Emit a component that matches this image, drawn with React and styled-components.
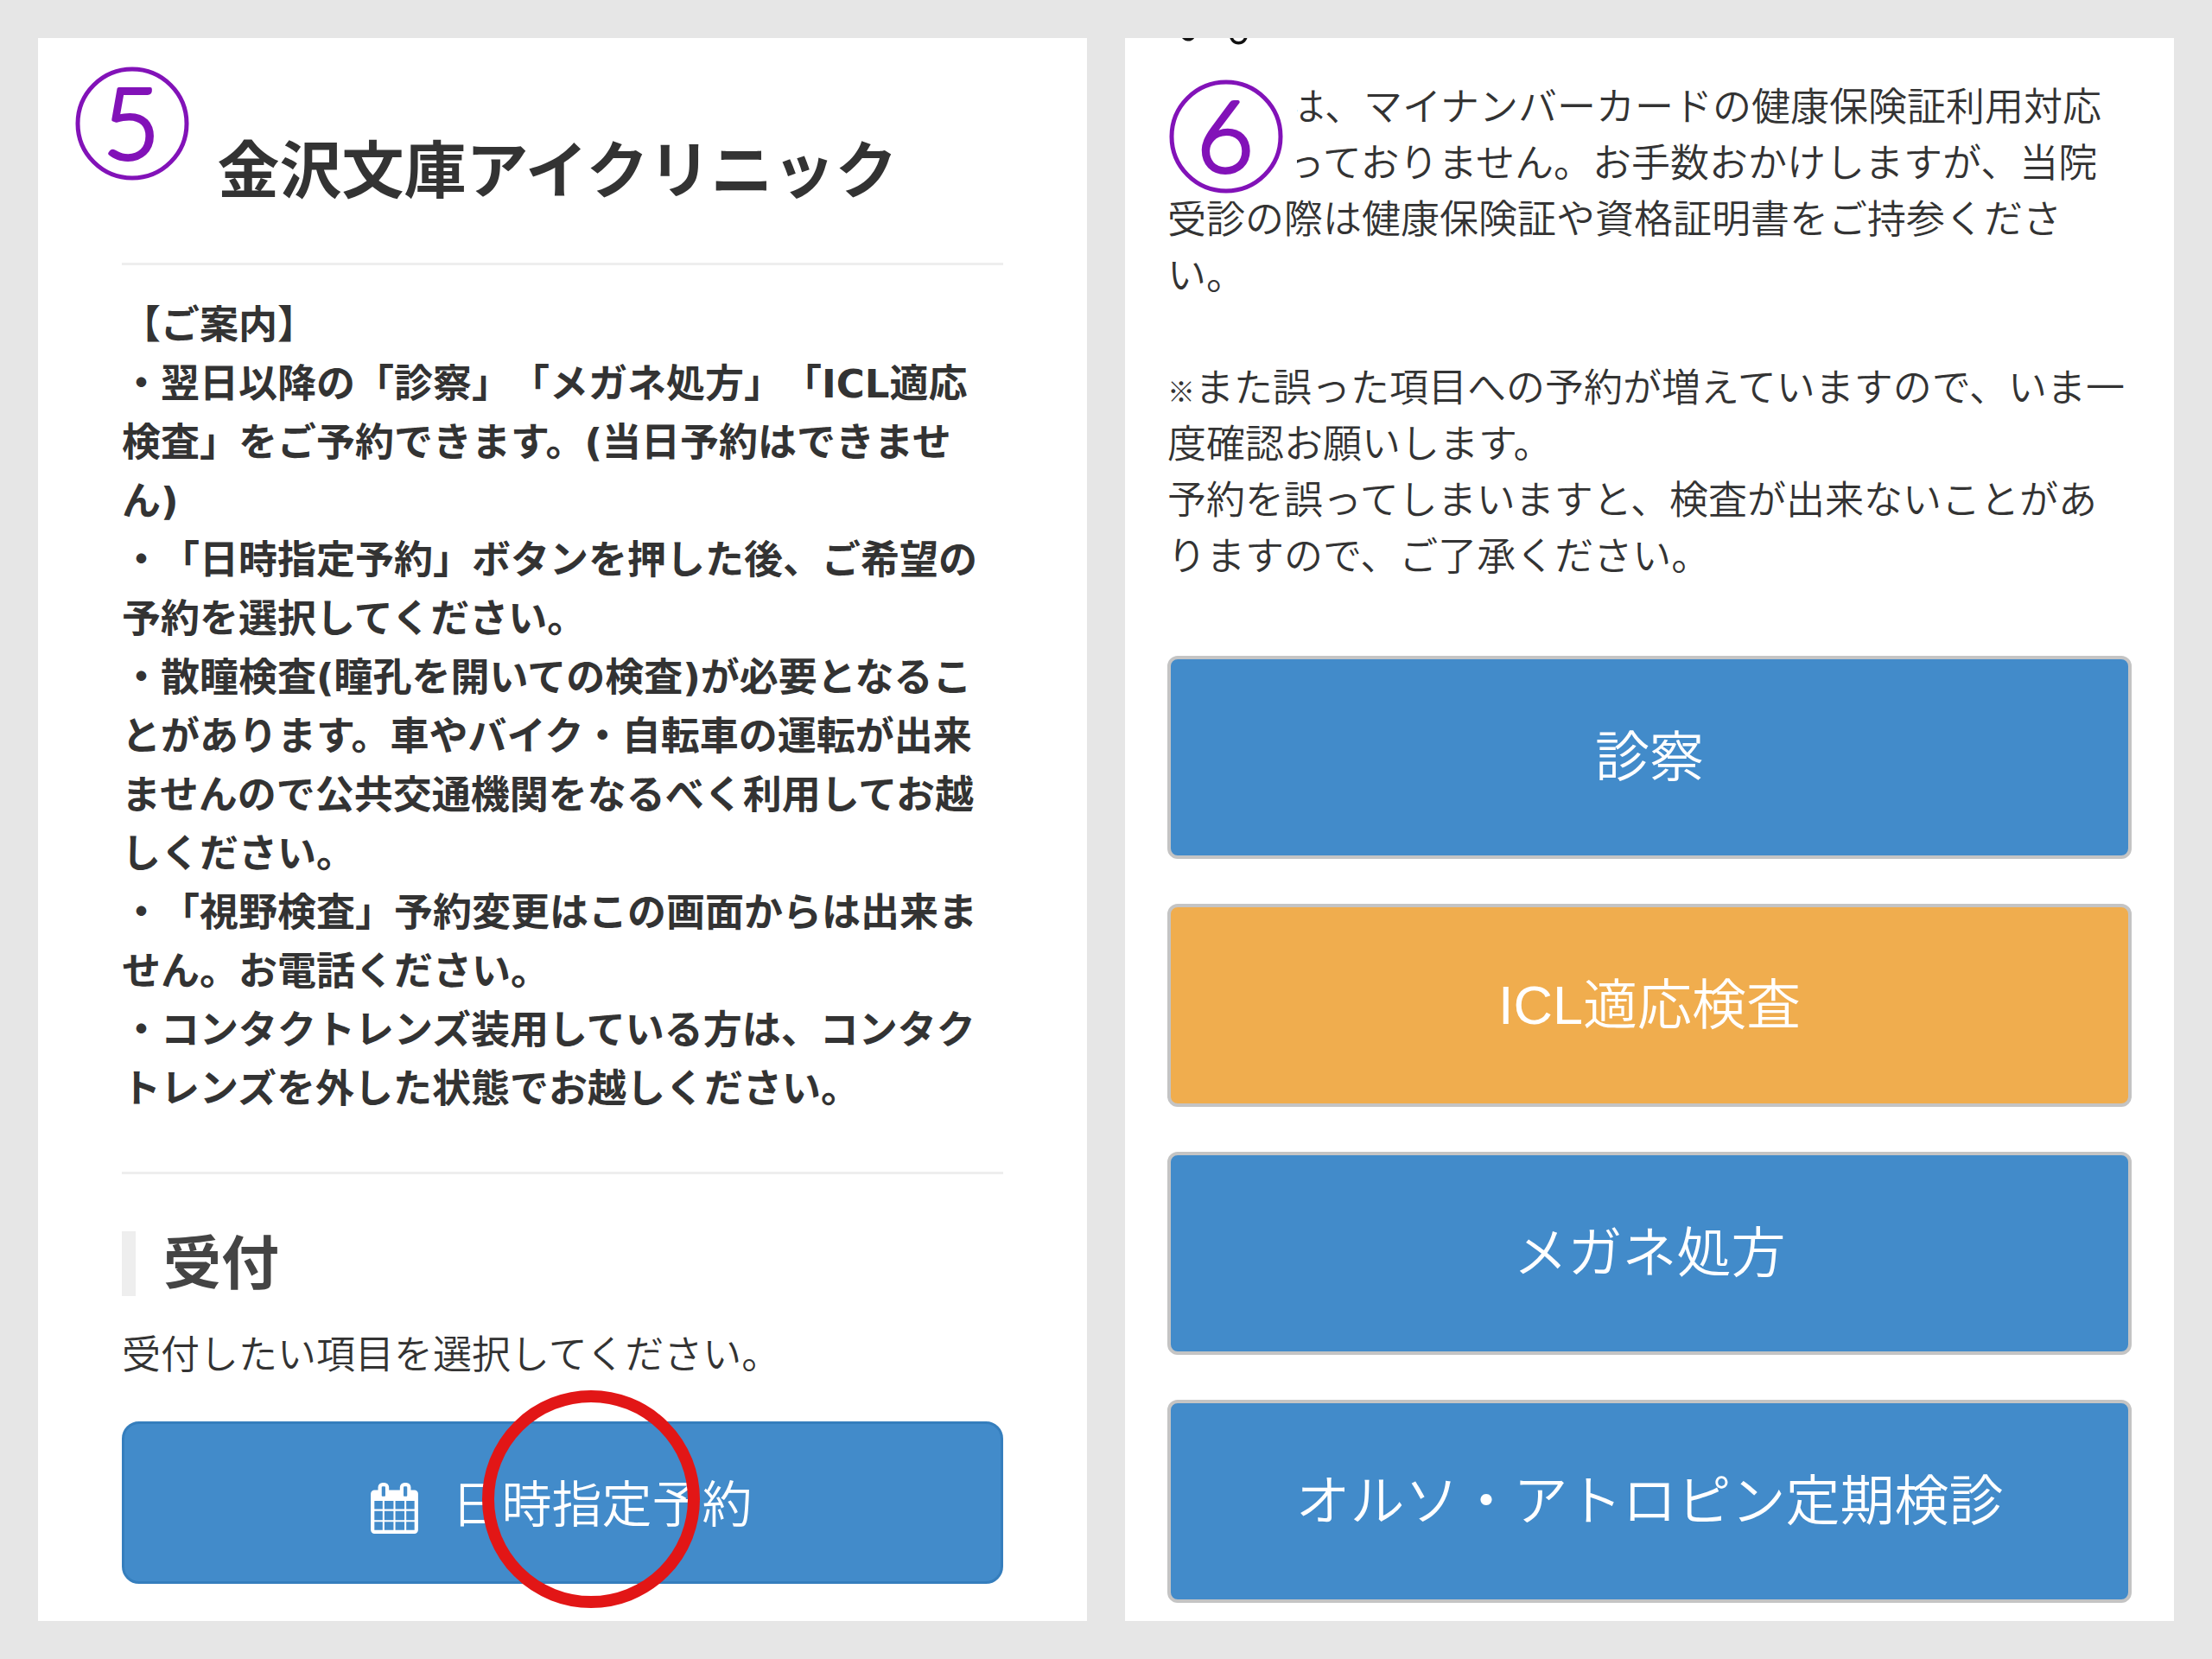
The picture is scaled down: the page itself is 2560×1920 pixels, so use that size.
import styled, { createGlobalStyle } from 'styled-components';

const GlobalStyle = createGlobalStyle`
  * {
    box-sizing: border-box;
  }
  body {
    margin: 0;
    background-color: #e6e6e6;
    color: #333;
    font-family: "Liberation Sans", "Noto Sans CJK JP", sans-serif;
    font-size: 45px;
    line-height: 65px;
    text-spacing-trim: space-all;
  }
  h1, h2, p {
    margin: 0;
  }
`;

const Page = styled.main`
  display: grid;
  grid-template-columns: repeat(2, minmax(0, 1fr));
  gap: 44px;
  min-height: 100vh;
  padding: 44px;
`;

const Panel = styled.section`
  position: relative;
  overflow: hidden;
  background-color: #fff;
  padding: 0 ${props => props.$side}px 20px;
`;

const Title = styled.h1`
  padding: 102px 12px 54px 0;
  border-bottom: 3px solid #eee;
  color: #333;
  font-size: 72px;
  line-height: 104px;
  text-align: center;
`;

const Notice = styled.div`
  padding: 36px 0 61px;
  border-bottom: 3px solid #eee;
  font-family: "DejaVu Sans", "Noto Sans CJK JP", sans-serif;
  font-weight: bold;
  line-height: 68px;
`;

const SectionTitle = styled.h2`
  margin: 66px 0 36px;
  padding-left: 32px;
  border-left: 16px solid #eee;
  color: #444;
  font-size: 67px;
  line-height: 75px;
`;

const Lead = styled.p`
  font-weight: 350;
`;

const ReserveArea = styled.div`
  position: relative;
  margin-top: 44px;
`;

const Button = styled.button`
  display: flex;
  align-items: center;
  justify-content: center;
  width: 100%;
  color: #fff;
  font-family: inherit;
  font-weight: 350;
  cursor: pointer;
`;

const ReserveButton = styled(Button)`
  gap: 36px;
  height: 188px;
  padding: 0 4px 4px 0;
  border: 3px solid #357ebd;
  border-radius: 20px;
  background-color: #428bca;
  font-size: 58px;
`;

const MenuButton = styled(Button)`
  height: 235px;
  padding: 0 0 12px;
  border: 4px solid #c4c4c4;
  border-radius: 12px;
  background-color: ${props => props.$bgColor || '#428bca'};
  font-size: 63px;
`;

const CalendarSvg = styled.svg`
  width: 59px;
  height: 59px;
  margin-top: 16px;
  fill: #fff;
`;

/* Red ring drawn over the reserve button */
const Ring = styled.span`
  position: absolute;
  top: -36px;
  left: calc(50% - 93px);
  width: 252px;
  height: 252px;
  border: 14px solid #e21616;
  border-radius: 50%;
  pointer-events: none;
`;

const StepSvg = styled.svg`
  display: block;
  overflow: visible;
  width: 132px;
  height: 132px;
  text {
    fill: #8212b8;
    stroke: #8212b8;
    stroke-width: 4px;
    stroke-linejoin: round;
    font-family: Lato, sans-serif;
    font-size: 114px;
    font-weight: 300;
    text-anchor: middle;
  }
`;

const CornerStep = styled.div`
  position: absolute;
  top: 33px;
  left: 43px;
`;

/* White backing hides the start of the text it sits on */
const InlineStep = styled.div`
  position: relative;
  z-index: 1;
  float: left;
  width: 150px;
  height: 141px;
  margin: 0 -13px -12px 0;
  padding-left: 2px;
  background-color: #fff;
`;

const CutLine = styled.div`
  display: flex;
  align-items: flex-end;
  height: 48px;
  color: #111;
  font-size: 69px;
  line-height: 136px;
`;

const Info = styled.div`
  font-weight: 350;
  p + p {
    margin-top: 65px;
  }
`;

const Mark = styled.span`
  font-size: 32px;
  font-weight: bold;
  line-height: 1;
`;

const Menu = styled.div`
  display: grid;
  gap: 52px;
  margin-top: 82px;
`;

const Step = ({ number }) => (
  <StepSvg viewBox="0 0 132 132" role="img" aria-label={`手順${number}`}>
    <circle cx="66" cy="66" r="63" fill="none" stroke="#8212b8" strokeWidth="5" />
    <text x="65" y="107">{number}</text>
  </StepSvg>
);

const CalendarIcon = () => (
  <CalendarSvg viewBox="0 0 1792 1792" aria-hidden="true">
    <path d="M192 1664h288v-288h-288v288zm352 0h320v-288h-320v288zm-352-352h288v-320h-288v320zm352 0h320v-320h-320v320zm-352-384h288v-288h-288v288zm736 736h320v-288h-320v288zm-384-736h320v-288h-320v288zm768 736h288v-288h-288v288zm-384-352h320v-320h-320v320zm-352-864v-288q0-13-9.5-22.5t-22.5-9.5h-64q-13 0-22.5 9.5t-9.5 22.5v288q0 13 9.5 22.5t22.5 9.5h64q13 0 22.5-9.5t9.5-22.5zm736 864h288v-320h-288v320zm-384-384h320v-288h-320v288zm384 0h288v-288h-288v288zm32-480v-288q0-13-9.5-22.5t-22.5-9.5h-64q-13 0-22.5 9.5t-9.5 22.5v288q0 13 9.5 22.5t22.5 9.5h64q13 0 22.5-9.5t9.5-22.5zm384-64v1280q0 52-38 90t-90 38h-1408q-52 0-90-38t-38-90v-1280q0-52 38-90t90-38h128v-96q0-66 47-113t113-47h64q66 0 113 47t47 113v96h384v-96q0-66 47-113t113-47h64q66 0 113 47t47 113v96h128q52 0 90 38t38 90z" />
  </CalendarSvg>
);

const menuItems = [
  { label: '診察' },
  { label: 'ICL適応検査', bgColor: '#f0ad4e' },
  { label: 'メガネ処方' },
  { label: 'オルソ・アトロピン定期検診' },
];

const App = () => {
  return (
    <>
      <GlobalStyle />
      <Page lang="ja">
        <Panel $side={97}>
          <CornerStep>
            <Step number={5} />
          </CornerStep>
          <Title>金沢文庫アイクリニック</Title>
          <Notice>
            <p>【ご案内】</p>
            <p>・翌日以降の「診察」「メガネ処方」「ICL適応検査」をご予約できます。(当日予約はできません)</p>
            <p>・「日時指定予約」ボタンを押した後、ご希望の予約を選択してください。</p>
            <p>・散瞳検査(瞳孔を開いての検査)が必要となることがあります。車やバイク・自転車の運転が出来ませんので公共交通機関をなるべく利用してお越しください。</p>
            <p>・「視野検査」予約変更はこの画面からは出来ません。お電話ください。</p>
            <p>・コンタクトレンズ装用している方は、コンタクトレンズを外した状態でお越しください。</p>
          </Notice>
          <SectionTitle>受付</SectionTitle>
          <Lead>受付したい項目を選択してください。</Lead>
          <ReserveArea>
            <ReserveButton type="button">
              <CalendarIcon />
              日時指定予約
            </ReserveButton>
            <Ring />
          </ReserveArea>
        </Panel>
        <Panel $side={49}>
          <CutLine>い。</CutLine>
          <Info>
            <InlineStep>
              <Step number={6} />
            </InlineStep>
            <p>は、マイナンバーカードの健康保険証利用対応<br />っておりません。お手数おかけしますが、当院受診の際は健康保険証や資格証明書をご持参ください。</p>
            <p><Mark>※</Mark>また誤った項目への予約が増えていますので、いま一度確認お願いします。<br />予約を誤ってしまいますと、検査が出来ないことがありますので、ご了承ください。</p>
          </Info>
          <Menu>
            {menuItems.map(item => (
              <MenuButton key={item.label} type="button" $bgColor={item.bgColor}>
                {item.label}
              </MenuButton>
            ))}
          </Menu>
        </Panel>
      </Page>
    </>
  );
};

export default App;
